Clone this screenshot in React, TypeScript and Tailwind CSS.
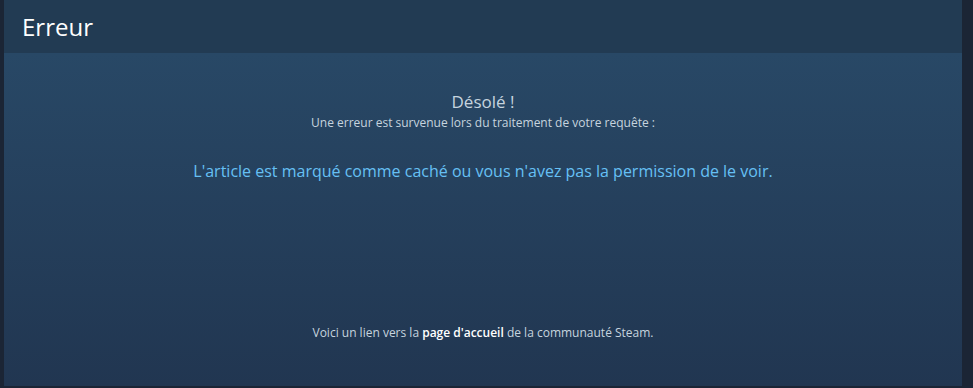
import React from 'react';

export default function App() {
  return (
    <div className="flex h-[388px] w-[973px] bg-[#1b2535] pb-[2px] pl-[4px] pr-[11px] font-['Open_Sans',Arial,sans-serif]">
      <div className="flex flex-1 flex-col">
        <div className="flex h-[53px] items-center bg-[#223b53] px-[18px]">
          <h1 className="text-[24px] leading-none text-white">Erreur</h1>
        </div>
        <div className="flex flex-1 flex-col items-center bg-gradient-to-b from-[#284866] to-[#213651] text-[#c6d4df]">
          <div className="mt-[37px] text-[17px] leading-[24px]">Désolé !</div>
          <div className="text-[12px] leading-[18px]">Une erreur est survenue lors du traitement de votre requête :</div>
          <div className="mt-[27px] text-[16px] leading-[24px] text-[#66c0f4]">
            L'article est marqué comme caché ou vous n'avez pas la permission de le voir.
          </div>
          <div className="mt-auto mb-[44px] text-[12px] leading-[18px]">
            Voici un lien vers la <a className="font-semibold text-white">page d'accueil</a> de la communauté Steam.
          </div>
        </div>
      </div>
    </div>
  );
}
